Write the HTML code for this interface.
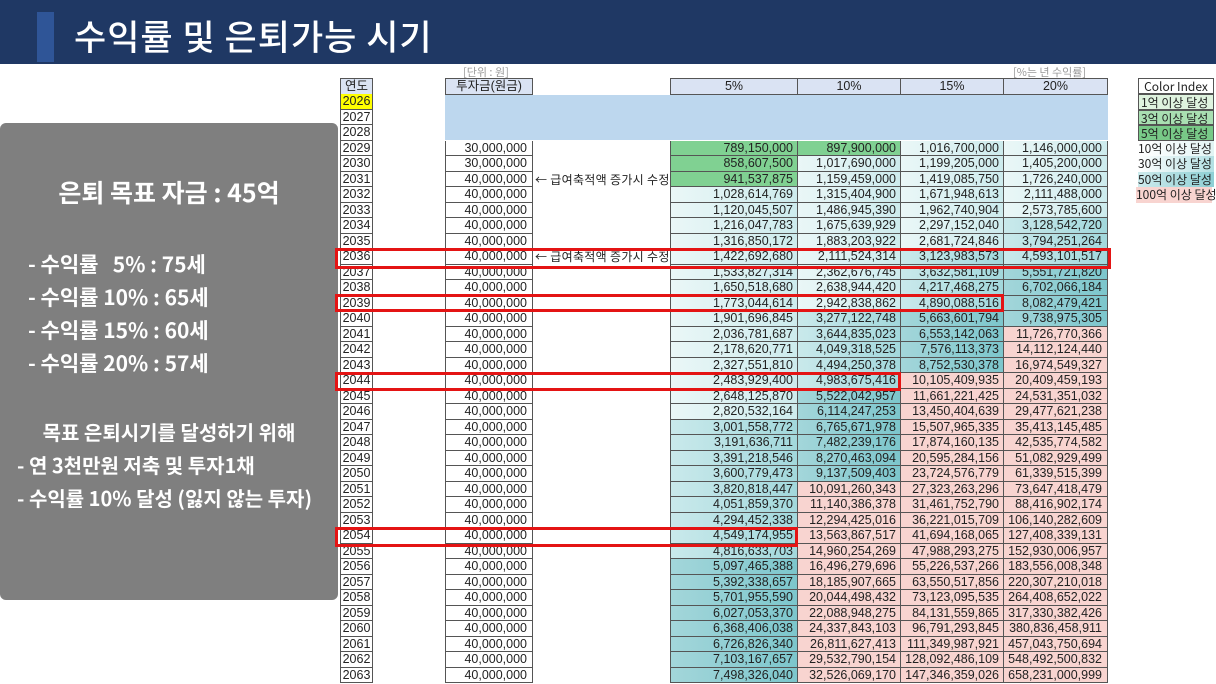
<!DOCTYPE html>
<html><head><meta charset="utf-8">
<style>
*{margin:0;padding:0;box-sizing:border-box}
body{width:1216px;height:684px;overflow:hidden;background:#fff;position:relative;font-family:"Liberation Sans","Noto Sans CJK KR",sans-serif}
.hdr{position:absolute;left:0;top:0;width:1216px;height:64px;background:#1f3864}
.acc{position:absolute;left:37px;top:12px;width:17px;height:50px;background:#2f5597}
.ttl{position:absolute;left:74px;top:11px;color:#fff;font-size:35px;font-weight:500;letter-spacing:1px;font-family:"Noto Sans CJK KR",sans-serif;line-height:50px}
.panel{position:absolute;left:0;top:123px;width:338px;height:477px;background:#7f7f7f;border-radius:6px;color:#fff;font-family:"Noto Sans CJK KR",sans-serif;font-weight:bold}
.panel div{position:absolute;white-space:nowrap}
.tb{position:absolute;left:0;top:94px;width:1216px;font-family:"Liberation Sans Narrow","Liberation Sans","Noto Sans CJK KR",sans-serif;font-size:12.5px;color:#222}
.r{position:relative;height:15.5px}
.r>div{position:absolute;top:0;height:15.5px;line-height:15px;white-space:nowrap;border-bottom:1px solid #555}
.y{left:340px;width:33px;text-align:center;border-left:1px solid #555;border-right:1px solid #555}
.i{left:445px;width:88px;text-align:right;padding-right:5px;border-left:1px solid #555;border-right:1px solid #555}
.n{left:535px;width:135px;border-bottom:none!important;font-family:"Noto Sans CJK KR",sans-serif;font-size:12px;letter-spacing:0.3px}
.a,.b,.c,.d{text-align:right;padding-right:5px;border-left:1px solid #555}
.a{left:670px;width:128px}.b{left:797px;width:104px}.c{left:900px;width:104px}.d{left:1003px;width:105px;border-right:1px solid #555}
.g{background:#80d192}
.c1{background:linear-gradient(90deg,#eaf7f7,#cdebed)}
.c2{background:linear-gradient(90deg,#c9e9eb,#a2d8dc)}
.c3{background:linear-gradient(90deg,#a3d6da,#7cc6cc)}
.p{background:#f8d4d0}
.hd{position:absolute;top:78px;height:17px;background:#dae3f3;border:1px solid #555;text-align:center;font-size:12.5px;line-height:15px;font-family:"Liberation Sans Narrow","Liberation Sans","Noto Sans CJK KR",sans-serif;color:#222}
.blue{position:absolute;left:445px;top:95px;width:663px;height:45px;background:#bdd7ee}
.red{position:absolute;border:3px solid #e41414}
.cap{position:absolute;top:66px;font-size:11px;color:#999;font-family:"Noto Sans CJK KR",sans-serif;line-height:12px}
.ci{position:absolute;left:1138px;width:76px;height:15.5px;font-size:12px;line-height:15px;font-family:"Liberation Sans Narrow","Noto Sans CJK KR",sans-serif;color:#222;white-space:nowrap}
</style></head><body>
<div class="hdr"></div><div class="acc"></div>
<div class="ttl">수익률 및 은퇴가능 시기</div>

<div class="panel">
<div style="left:0;width:338px;text-align:center;top:51px;font-size:25px">은퇴 목표 자금 : 45억</div>
<div style="left:28px;top:126px;font-size:21px">- 수익률 &nbsp; 5% : 75세</div>
<div style="left:28px;top:159px;font-size:21px">- 수익률 10% : 65세</div>
<div style="left:28px;top:192px;font-size:21px">- 수익률 15% : 60세</div>
<div style="left:28px;top:225px;font-size:21px">- 수익률 20% : 57세</div>
<div style="left:0;width:338px;text-align:center;top:294px;font-size:20px">목표 은퇴시기를 달성하기 위해</div>
<div style="left:17px;top:327px;font-size:20px">- 연 3천만원 저축 및 투자1채</div>
<div style="left:17px;top:360px;font-size:20px">- 수익률 10% 달성 (잃지 않는 투자)</div>
</div>

<div class="cap" style="left:463px">[단위 : 원]</div>
<div class="cap" style="left:1013px">[%는 년 수익률]</div>

<div class="hd" style="left:340px;width:33px">연도</div>
<div class="hd" style="left:445px;width:88px">투자금(원금)</div>
<div class="hd" style="left:670px;width:128px">5%</div>
<div class="hd" style="left:797px;width:104px">10%</div>
<div class="hd" style="left:900px;width:104px">15%</div>
<div class="hd" style="left:1003px;width:105px">20%</div>

<div class="ci" style="top:78px;border:1px solid #555;text-align:center;background:#fff">Color Index</div>
<div class="ci" style="top:94px;background:#dff3df;border:1px solid #555;padding-left:2px">1억 이상 달성</div>
<div class="ci" style="top:109.5px;background:#a9dfb2;border:1px solid #555;padding-left:2px">3억 이상 달성</div>
<div class="ci" style="top:125px;background:#78c987;border:1px solid #555;padding-left:2px">5억 이상 달성</div>
<div class="ci" style="top:140.5px;background:linear-gradient(90deg,#fff,#e2f4f4)">10억 이상 달성</div>
<div class="ci" style="top:156px;background:linear-gradient(90deg,#fff,#b3e0e3)">30억 이상 달성</div>
<div class="ci" style="top:171.5px;background:linear-gradient(90deg,#cdeaec,#8ed0d5)">50억 이상 달성</div>
<div class="ci" style="top:187px;left:1136px;background:#f8d4d0">100억 이상 달성</div>

<div class="tb">
<div class="r"><div class="y" style="background:#ffff00">2026</div></div>
<div class="r"><div class="y">2027</div></div>
<div class="r"><div class="y">2028</div></div>
<div class="r"><div class="y">2029</div><div class="i">30,000,000</div><div class="a g">789,150,000</div><div class="b g">897,900,000</div><div class="c c1">1,016,700,000</div><div class="d c1">1,146,000,000</div></div>
<div class="r"><div class="y">2030</div><div class="i">30,000,000</div><div class="a g">858,607,500</div><div class="b c1">1,017,690,000</div><div class="c c1">1,199,205,000</div><div class="d c1">1,405,200,000</div></div>
<div class="r"><div class="y">2031</div><div class="i">40,000,000</div><div class="n">← 급여축적액 증가시 수정</div><div class="a g">941,537,875</div><div class="b c1">1,159,459,000</div><div class="c c1">1,419,085,750</div><div class="d c1">1,726,240,000</div></div>
<div class="r"><div class="y">2032</div><div class="i">40,000,000</div><div class="a c1">1,028,614,769</div><div class="b c1">1,315,404,900</div><div class="c c1">1,671,948,613</div><div class="d c1">2,111,488,000</div></div>
<div class="r"><div class="y">2033</div><div class="i">40,000,000</div><div class="a c1">1,120,045,507</div><div class="b c1">1,486,945,390</div><div class="c c1">1,962,740,904</div><div class="d c1">2,573,785,600</div></div>
<div class="r"><div class="y">2034</div><div class="i">40,000,000</div><div class="a c1">1,216,047,783</div><div class="b c1">1,675,639,929</div><div class="c c1">2,297,152,040</div><div class="d c2">3,128,542,720</div></div>
<div class="r"><div class="y">2035</div><div class="i">40,000,000</div><div class="a c1">1,316,850,172</div><div class="b c1">1,883,203,922</div><div class="c c1">2,681,724,846</div><div class="d c2">3,794,251,264</div></div>
<div class="r"><div class="y">2036</div><div class="i">40,000,000</div><div class="n">← 급여축적액 증가시 수정</div><div class="a c1">1,422,692,680</div><div class="b c1">2,111,524,314</div><div class="c c2">3,123,983,573</div><div class="d c2">4,593,101,517</div></div>
<div class="r"><div class="y">2037</div><div class="i">40,000,000</div><div class="a c1">1,533,827,314</div><div class="b c1">2,362,676,745</div><div class="c c2">3,632,581,109</div><div class="d c3">5,551,721,820</div></div>
<div class="r"><div class="y">2038</div><div class="i">40,000,000</div><div class="a c1">1,650,518,680</div><div class="b c1">2,638,944,420</div><div class="c c2">4,217,468,275</div><div class="d c3">6,702,066,184</div></div>
<div class="r"><div class="y">2039</div><div class="i">40,000,000</div><div class="a c1">1,773,044,614</div><div class="b c1">2,942,838,862</div><div class="c c2">4,890,088,516</div><div class="d c3">8,082,479,421</div></div>
<div class="r"><div class="y">2040</div><div class="i">40,000,000</div><div class="a c1">1,901,696,845</div><div class="b c2">3,277,122,748</div><div class="c c3">5,663,601,794</div><div class="d c3">9,738,975,305</div></div>
<div class="r"><div class="y">2041</div><div class="i">40,000,000</div><div class="a c1">2,036,781,687</div><div class="b c2">3,644,835,023</div><div class="c c3">6,553,142,063</div><div class="d p">11,726,770,366</div></div>
<div class="r"><div class="y">2042</div><div class="i">40,000,000</div><div class="a c1">2,178,620,771</div><div class="b c2">4,049,318,525</div><div class="c c3">7,576,113,373</div><div class="d p">14,112,124,440</div></div>
<div class="r"><div class="y">2043</div><div class="i">40,000,000</div><div class="a c1">2,327,551,810</div><div class="b c2">4,494,250,378</div><div class="c c3">8,752,530,378</div><div class="d p">16,974,549,327</div></div>
<div class="r"><div class="y">2044</div><div class="i">40,000,000</div><div class="a c1">2,483,929,400</div><div class="b c2">4,983,675,416</div><div class="c p">10,105,409,935</div><div class="d p">20,409,459,193</div></div>
<div class="r"><div class="y">2045</div><div class="i">40,000,000</div><div class="a c1">2,648,125,870</div><div class="b c3">5,522,042,957</div><div class="c p">11,661,221,425</div><div class="d p">24,531,351,032</div></div>
<div class="r"><div class="y">2046</div><div class="i">40,000,000</div><div class="a c1">2,820,532,164</div><div class="b c3">6,114,247,253</div><div class="c p">13,450,404,639</div><div class="d p">29,477,621,238</div></div>
<div class="r"><div class="y">2047</div><div class="i">40,000,000</div><div class="a c2">3,001,558,772</div><div class="b c3">6,765,671,978</div><div class="c p">15,507,965,335</div><div class="d p">35,413,145,485</div></div>
<div class="r"><div class="y">2048</div><div class="i">40,000,000</div><div class="a c2">3,191,636,711</div><div class="b c3">7,482,239,176</div><div class="c p">17,874,160,135</div><div class="d p">42,535,774,582</div></div>
<div class="r"><div class="y">2049</div><div class="i">40,000,000</div><div class="a c2">3,391,218,546</div><div class="b c3">8,270,463,094</div><div class="c p">20,595,284,156</div><div class="d p">51,082,929,499</div></div>
<div class="r"><div class="y">2050</div><div class="i">40,000,000</div><div class="a c2">3,600,779,473</div><div class="b c3">9,137,509,403</div><div class="c p">23,724,576,779</div><div class="d p">61,339,515,399</div></div>
<div class="r"><div class="y">2051</div><div class="i">40,000,000</div><div class="a c2">3,820,818,447</div><div class="b p">10,091,260,343</div><div class="c p">27,323,263,296</div><div class="d p">73,647,418,479</div></div>
<div class="r"><div class="y">2052</div><div class="i">40,000,000</div><div class="a c2">4,051,859,370</div><div class="b p">11,140,386,378</div><div class="c p">31,461,752,790</div><div class="d p">88,416,902,174</div></div>
<div class="r"><div class="y">2053</div><div class="i">40,000,000</div><div class="a c2">4,294,452,338</div><div class="b p">12,294,425,016</div><div class="c p">36,221,015,709</div><div class="d p">106,140,282,609</div></div>
<div class="r"><div class="y">2054</div><div class="i">40,000,000</div><div class="a c2">4,549,174,955</div><div class="b p">13,563,867,517</div><div class="c p">41,694,168,065</div><div class="d p">127,408,339,131</div></div>
<div class="r"><div class="y">2055</div><div class="i">40,000,000</div><div class="a c2">4,816,633,703</div><div class="b p">14,960,254,269</div><div class="c p">47,988,293,275</div><div class="d p">152,930,006,957</div></div>
<div class="r"><div class="y">2056</div><div class="i">40,000,000</div><div class="a c3">5,097,465,388</div><div class="b p">16,496,279,696</div><div class="c p">55,226,537,266</div><div class="d p">183,556,008,348</div></div>
<div class="r"><div class="y">2057</div><div class="i">40,000,000</div><div class="a c3">5,392,338,657</div><div class="b p">18,185,907,665</div><div class="c p">63,550,517,856</div><div class="d p">220,307,210,018</div></div>
<div class="r"><div class="y">2058</div><div class="i">40,000,000</div><div class="a c3">5,701,955,590</div><div class="b p">20,044,498,432</div><div class="c p">73,123,095,535</div><div class="d p">264,408,652,022</div></div>
<div class="r"><div class="y">2059</div><div class="i">40,000,000</div><div class="a c3">6,027,053,370</div><div class="b p">22,088,948,275</div><div class="c p">84,131,559,865</div><div class="d p">317,330,382,426</div></div>
<div class="r"><div class="y">2060</div><div class="i">40,000,000</div><div class="a c3">6,368,406,038</div><div class="b p">24,337,843,103</div><div class="c p">96,791,293,845</div><div class="d p">380,836,458,911</div></div>
<div class="r"><div class="y">2061</div><div class="i">40,000,000</div><div class="a c3">6,726,826,340</div><div class="b p">26,811,627,413</div><div class="c p">111,349,987,921</div><div class="d p">457,043,750,694</div></div>
<div class="r"><div class="y">2062</div><div class="i">40,000,000</div><div class="a c3">7,103,167,657</div><div class="b p">29,532,790,154</div><div class="c p">128,092,486,109</div><div class="d p">548,492,500,832</div></div>
<div class="r"><div class="y">2063</div><div class="i">40,000,000</div><div class="a c3">7,498,326,040</div><div class="b p">32,526,069,170</div><div class="c p">147,346,359,026</div><div class="d p">658,231,000,999</div></div>
</div>

<div class="blue"></div>

<div class="red" style="left:335px;top:248px;width:776px;height:21px"></div>
<div class="red" style="left:335px;top:294px;width:669px;height:18px"></div>
<div class="red" style="left:335px;top:372px;width:566px;height:19px"></div>
<div class="red" style="left:335px;top:527px;width:463px;height:20px"></div>
</body></html>
